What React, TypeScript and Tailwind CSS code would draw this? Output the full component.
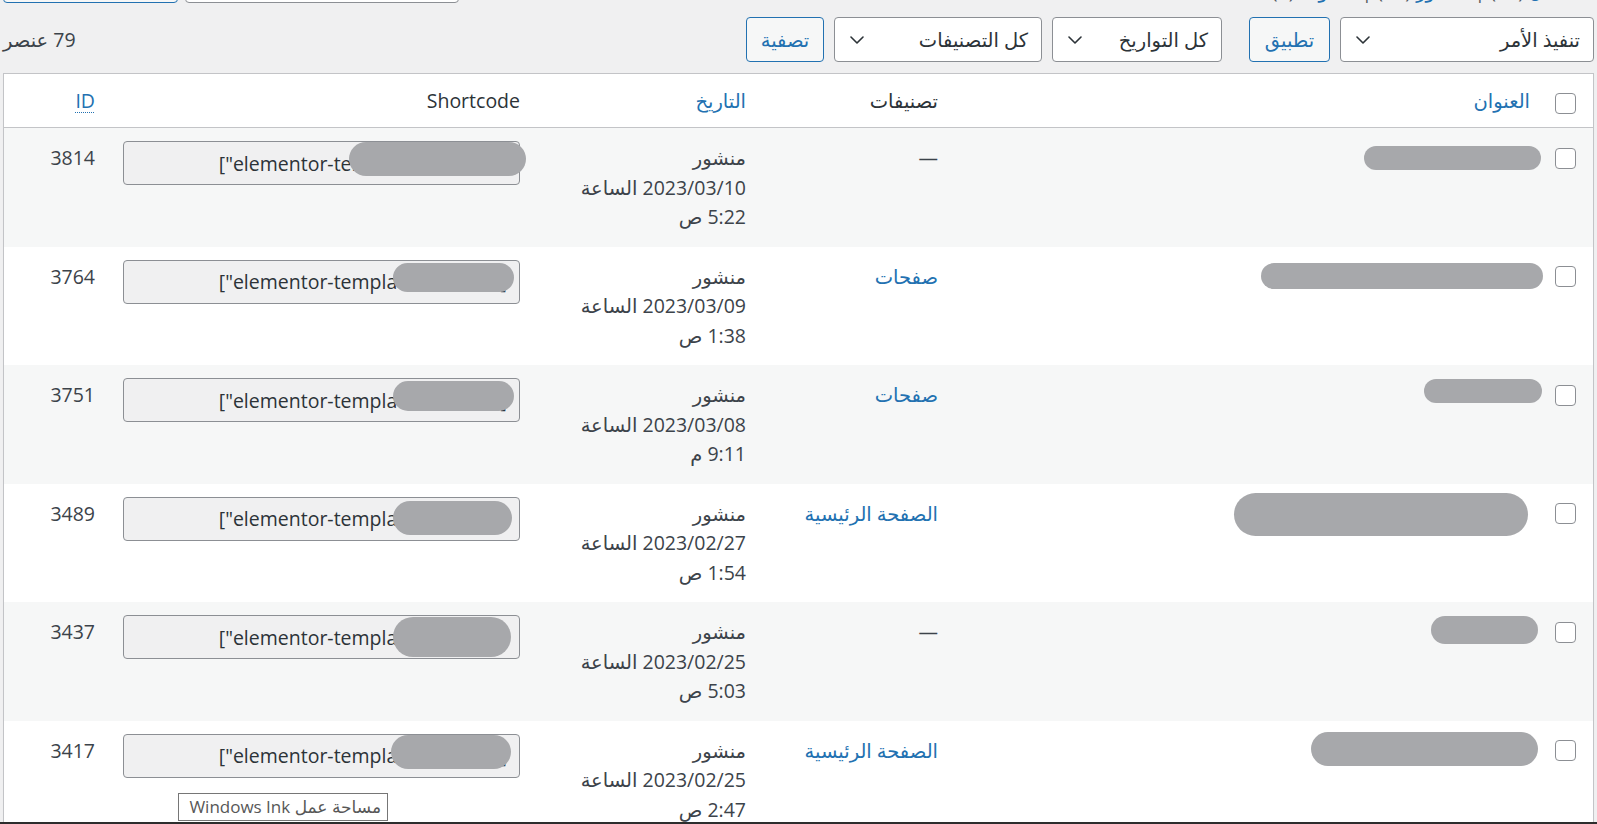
import React from "react";

type Blob = { left: number; top: number; width: number; height: number };

type Row = {
  id: number;
  category: string | null;
  date: string;
  time: string;
  title: Blob;
  code: Blob;
};

// redaction marks, measured from the screenshot (relative to each row)
const ROWS: Row[] = [
  {
    id: 3814,
    category: null,
    date: "2023/03/10",
    time: "5:22 ص",
    title: { left: 1360, top: 18, width: 177, height: 24 },
    code: { left: 345, top: 14, width: 177, height: 34 },
  },
  {
    id: 3764,
    category: "صفحات",
    date: "2023/03/09",
    time: "1:38 ص",
    title: { left: 1257, top: 16, width: 282, height: 26 },
    code: { left: 389, top: 16, width: 121, height: 29 },
  },
  {
    id: 3751,
    category: "صفحات",
    date: "2023/03/08",
    time: "9:11 م",
    title: { left: 1420, top: 14, width: 118, height: 24 },
    code: { left: 389, top: 16, width: 121, height: 30 },
  },
  {
    id: 3489,
    category: "الصفحة الرئيسية",
    date: "2023/02/27",
    time: "1:54 ص",
    title: { left: 1230, top: 9, width: 294, height: 43 },
    code: { left: 389, top: 17, width: 119, height: 34 },
  },
  {
    id: 3437,
    category: null,
    date: "2023/02/25",
    time: "5:03 ص",
    title: { left: 1427, top: 14, width: 107, height: 28 },
    code: { left: 389, top: 15, width: 118, height: 40 },
  },
  {
    id: 3417,
    category: "الصفحة الرئيسية",
    date: "2023/02/25",
    time: "2:47 ص",
    title: { left: 1307, top: 11, width: 227, height: 34 },
    code: { left: 387, top: 14, width: 120, height: 34 },
  },
];

const COLS = "grid grid-cols-[49px_592px_192px_226px_425px_1fr]";

function Checkbox() {
  return <span className="block h-[21px] w-[21px] rounded-[4px] border border-[#8c8f94] bg-white" />;
}

function Chevron() {
  return (
    <svg width="14" height="8" viewBox="0 0 14 8" className="text-[#2c3338]">
      <path d="M1 1l6 6 6-6" fill="none" stroke="currentColor" strokeWidth="1.6" strokeLinecap="round" strokeLinejoin="round" />
    </svg>
  );
}

function Select({ label, className }: { label: string; className: string }) {
  return (
    <div
      className={`flex h-[45px] items-center justify-between rounded-[4px] border border-[#8c8f94] bg-white pl-[15px] pr-[13px] text-[#2c3338] ${className}`}
    >
      <span>{label}</span>
      <Chevron />
    </div>
  );
}

function Button({ label, className = "" }: { label: string; className?: string }) {
  return (
    <button
      className={`flex h-[45px] items-center justify-center rounded-[4px] border border-[#2271b1] bg-[#f6f7f7] text-[#2271b1] ${className}`}
    >
      {label}
    </button>
  );
}

function Mark({ b }: { b: Blob }) {
  return (
    <span
      className="absolute rounded-full bg-[#a7a8ab]"
      style={{ left: b.left, top: b.top, width: b.width, height: b.height }}
    />
  );
}

export default function App() {
  return (
    <div
      dir="rtl"
      className="relative h-[824px] overflow-hidden bg-[#f0f0f1] px-[3px] font-['Open_Sans','DejaVu_Sans',sans-serif] text-[19.5px] leading-[29.5px] text-[#3c434a]"
    >
      {/* شريط علوي مقصوص: الروابط وصندوق البحث */}
      <div className="-mt-[41px] flex h-[44px] items-start justify-between">
        <div className="mt-[17px] whitespace-nowrap pr-[28px] text-[#50575e]">
          <span className="text-[#2271b1]">الكل</span> (79) | <span className="text-[#2271b1]">منشور</span> (79) |{" "}
          <span className="text-[#2271b1]">مسودة</span> (0)
        </div>
        <div className="flex items-start gap-[7px]">
          <div className="h-[44px] w-[274px] rounded-[4px] border border-[#8c8f94] bg-white" />
          <div className="h-[44px] w-[175px] rounded-[4px] border border-[#2271b1] bg-[#f6f7f7]" />
        </div>
      </div>

      {/* أدوات التصفية */}
      <div className="mt-[14px] flex h-[45px] items-center gap-[10px]">
        <Select label="تنفيذ الأمر" className="w-[254px]" />
        <Button label="تطبيق" className="me-[17px] w-[81px]" />
        <Select label="كل التواريخ" className="w-[170px]" />
        <Select label="كل التصنيفات" className="w-[208px]" />
        <Button label="تصفية" className="w-[78px]" />
        <span className="ms-auto">79 عنصر</span>
      </div>

      {/* الجدول */}
      <div className="mt-[11px] border border-[#c3c4c7] bg-white shadow-[0_1px_1px_rgba(0,0,0,0.04)]">
        <div className={`${COLS} h-[54px] items-center border-b border-[#c3c4c7]`}>
          <div className="mt-[5px] pr-[17px]">
            <Checkbox />
          </div>
          <div className="px-[14px] text-[#2271b1]">العنوان</div>
          <div className="px-[14px] text-[#2c3338]">تصنيفات</div>
          <div className="px-[14px] text-[#2271b1]">التاريخ</div>
          <div className="px-[14px] text-[#2c3338]">Shortcode</div>
          <div className="px-[14px] text-[#2271b1]">
            <span className="underline decoration-dotted decoration-1 underline-offset-4">ID</span>
          </div>
        </div>

        {ROWS.map((row, i) => (
          <div
            key={row.id}
            className={`${COLS} relative h-[118.6px] items-start ${i % 2 === 0 ? "bg-[#f6f7f7]" : "bg-white"}`}
          >
            <div className="pr-[17px] pt-[19.5px]">
              <Checkbox />
            </div>
            <div />
            <div className="px-[14px] pt-[15px]">
              {row.category ? (
                <span className="text-[#2271b1]">{row.category}</span>
              ) : (
                <span>—</span>
              )}
            </div>
            <div className="px-[14px] pt-[15px]">
              <div>منشور</div>
              <div>{row.date} الساعة</div>
              <div>{row.time}</div>
            </div>
            <div className="px-[14px] pt-[13px]">
              <input
                readOnly
                value={`[elementor-template id="${row.id}"]`}
                className="h-[44px] w-full rounded-[4px] border border-[#8c8f94] bg-[#f0f0f1] px-[12px] text-[#2c3338] outline-none"
              />
            </div>
            <div className="px-[14px] pt-[15px]">{row.id}</div>
            <Mark b={row.title} />
            <Mark b={row.code} />
          </div>
        ))}
      </div>

      {/* تلميح Windows Ink */}
      <div className="absolute left-[178px] top-[793px] flex h-[28px] w-[210px] items-center border border-[#767676] bg-white px-[6px] text-[17px] leading-[20px] text-[#575757]">
        مساحة عمل Windows Ink
      </div>

      <div className="fixed inset-x-0 bottom-0 h-[2px] bg-[#2d2d2d]" />
    </div>
  );
}
